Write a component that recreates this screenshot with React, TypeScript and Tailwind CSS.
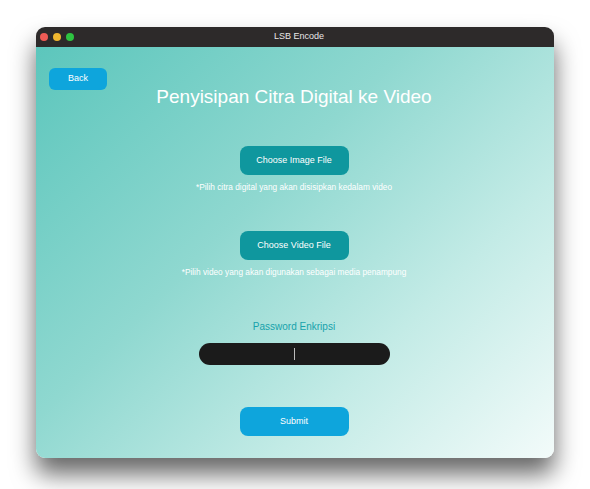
import React from 'react';

const font = { fontFamily: '"Liberation Sans", Roboto, Arial, sans-serif' };

export default function App() {
  return (
    <div className="w-[590px] h-[489px] bg-white pl-[36px] pt-[27px]" style={font}>
      <div className="w-[518px] h-[431px] rounded-[9px] overflow-hidden flex flex-col shadow-[0_16px_24px_rgba(0,0,0,0.6)]">
        {/* title bar */}
        <div className="h-[20px] bg-[#2d2a2a] flex items-center shrink-0">
          <div className="flex gap-[5px] pl-[4px]">
            <span className="w-[8px] h-[8px] rounded-full bg-[#ef5b55]" />
            <span className="w-[8px] h-[8px] rounded-full bg-[#f0b72f]" />
            <span className="w-[8px] h-[8px] rounded-full bg-[#2ec441]" />
          </div>
          <div className="flex-1 text-center text-[9px] font-medium text-[#e8e8e8] pr-[30px]">LSB Encode</div>
        </div>

        {/* body */}
        <div className="flex-1 bg-[linear-gradient(135deg,#5cc6bc_0%,#8fd8d0_40%,#c3ebe6_70%,#f3fbfa_100%)] pt-[21px] pl-[13px] pr-[15px] flex flex-col">
          <div className="grid grid-cols-[1fr_auto_1fr] items-start">
            <button className="w-[58px] h-[22px] rounded-[6px] bg-[#0ea5dc] text-white text-[9px]">Back</button>
            <h1 className="mt-[17px] text-[19px] leading-[24px] text-white font-light">Penyisipan Citra Digital ke Video</h1>
            <div />
          </div>

          <div className="flex flex-col items-center">
            <button className="mt-[37px] w-[109px] h-[29px] rounded-[8px] bg-[#0f979e] text-white text-[9px]">
              Choose Image File
            </button>
            <p className="mt-[7px] text-[8.3px] leading-[10px] text-white">
              *Pilih citra digital yang akan disisipkan kedalam video
            </p>

            <button className="mt-[39px] w-[109px] h-[29px] rounded-[8px] bg-[#0f979e] text-white text-[9px]">
              Choose Video File
            </button>
            <p className="mt-[7px] text-[8.3px] leading-[10px] text-white">
              *Pilih video yang akan digunakan sebagai media penampung
            </p>

            <label className="mt-[43px] text-[10px] leading-[13px] text-[#17a2ab]">Password Enkripsi</label>
            <div className="mt-[10px] w-[191px] h-[22px] rounded-full bg-[#1b1b1b] flex items-center justify-center">
              <span className="w-px h-[12px] bg-[#bbbbbb]" />
            </div>

            <button className="mt-[42px] w-[109px] h-[29px] rounded-[8px] bg-[#0ea5dc] text-white text-[9px]">
              Submit
            </button>
          </div>
        </div>
      </div>
    </div>
  );
}
